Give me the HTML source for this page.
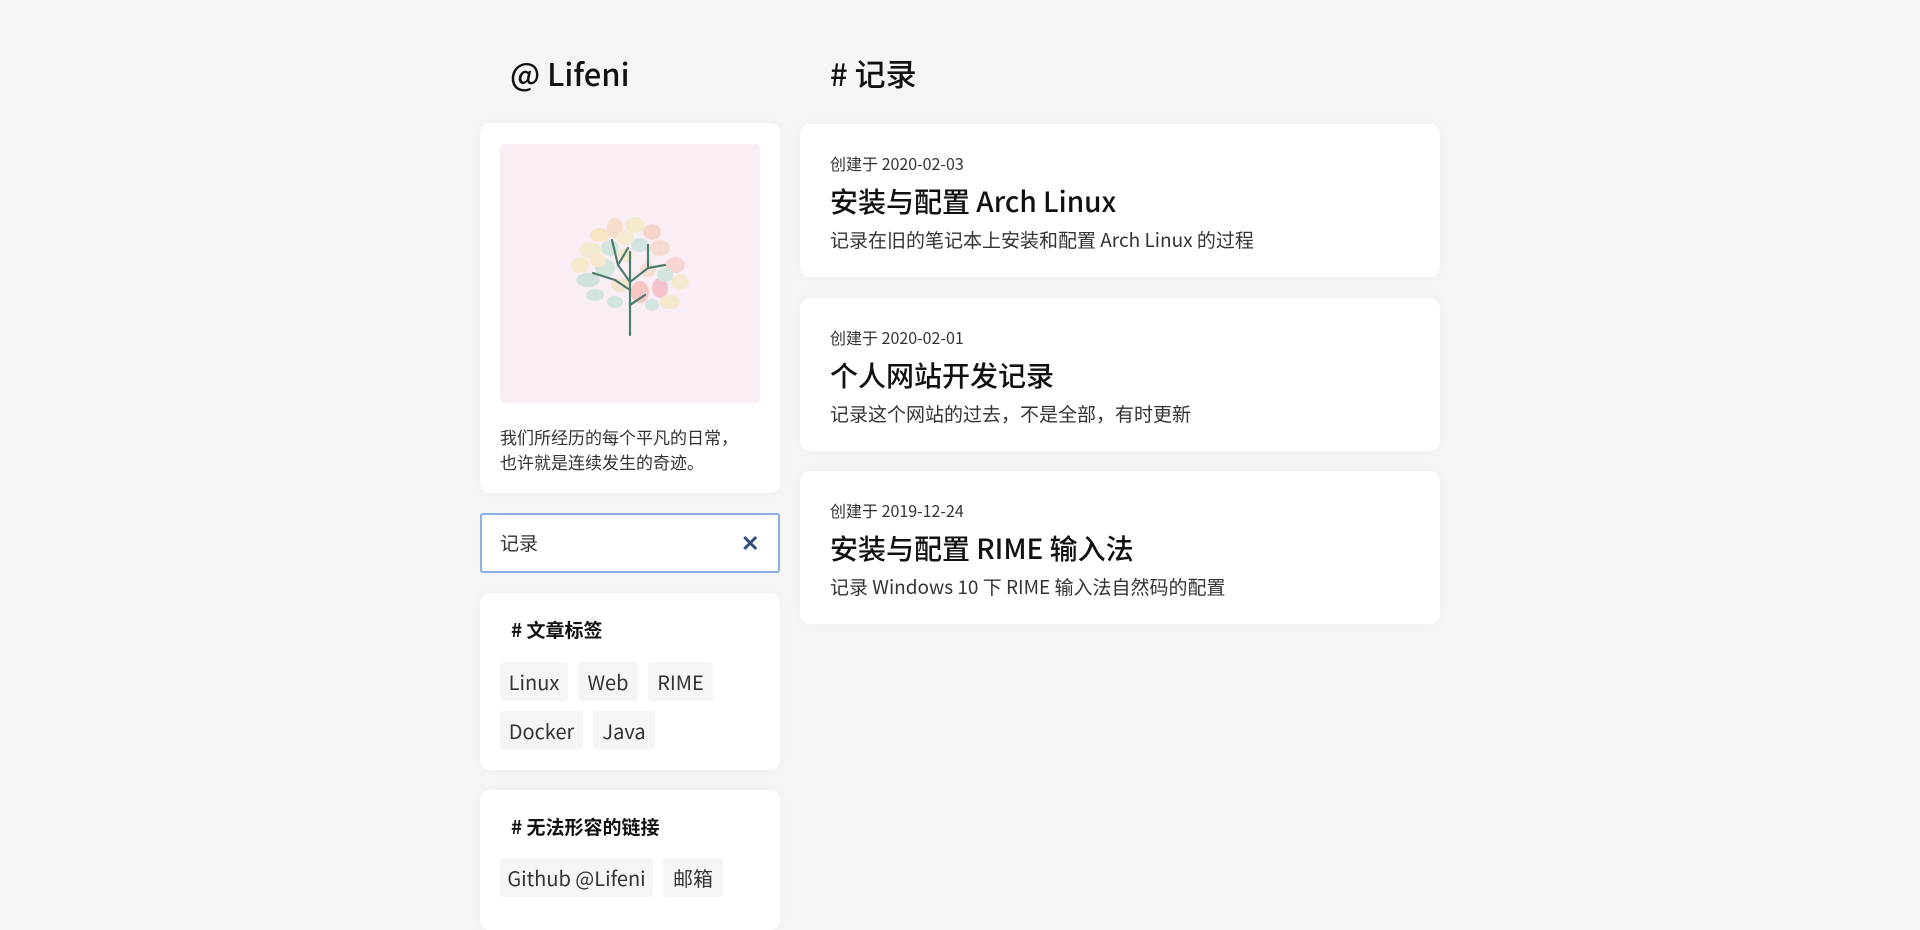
<!DOCTYPE html>
<html><head><meta charset="utf-8">
<style>
*{box-sizing:border-box;margin:0;padding:0}
body{width:1920px;height:882px;background:#f5f5f5;font-family:"Noto Sans CJK SC","Liberation Sans",sans-serif;color:#222;position:relative;overflow:hidden}
.abs{position:absolute}
.card{position:absolute;background:#fff;border-radius:10px;box-shadow:0 0 12px rgba(0,0,0,0.03)}
h1{position:absolute;font-size:31px;font-weight:500;color:#111;line-height:40px}
.tag{position:absolute;background:#f5f5f5;border-radius:4px;font-size:20px;font-weight:400;color:#333;line-height:39px;text-align:center;height:39px}
.hd{position:absolute;left:31px;font-size:19px;font-weight:700;color:#111;line-height:26px}
.date{position:absolute;left:30px;font-size:16px;color:#333;line-height:22px}
.tt{position:absolute;left:30px;font-size:28px;color:#111;line-height:36px;font-weight:500}
.ds{position:absolute;left:30px;font-size:19px;color:#333;line-height:26px;font-weight:400}
</style></head><body>
<h1 style="left:510px;top:53px">@ Lifeni</h1>
<h1 style="left:830px;top:53px"># 记录</h1>

<div class="card" style="left:480px;top:123px;width:300px;height:370px">
  <div class="abs" style="left:20px;top:21px;width:260px;height:259px;background:#f9eef6;border-radius:4px"></div>
  <div class="abs" style="left:20px;top:301px;font-size:17px;line-height:25px;color:#333">我们所经历的每个平凡的日常，<br>也许就是连续发生的奇迹。</div>
</div>
<svg class="abs" style="left:560px;top:210px" width="140" height="130" viewBox="0 0 140 130">
 <g opacity="0.45">
  <ellipse cx="40" cy="25" rx="10" ry="7" fill="#f6d98a"/>
  <ellipse cx="55" cy="18" rx="8" ry="10" fill="#f7c89a"/>
  <ellipse cx="75" cy="15" rx="10" ry="8" fill="#f2e69a"/>
  <ellipse cx="92" cy="22" rx="9" ry="8" fill="#f5b69a"/>
  <ellipse cx="30" cy="40" rx="11" ry="8" fill="#e9e79e"/>
  <ellipse cx="50" cy="38" rx="9" ry="8" fill="#a7d8c4"/>
  <ellipse cx="100" cy="38" rx="10" ry="8" fill="#f6c6a0"/>
  <ellipse cx="80" cy="35" rx="9" ry="7" fill="#a8d8c8"/>
  <ellipse cx="20" cy="55" rx="9" ry="8" fill="#f3e59a"/>
  <ellipse cx="28" cy="70" rx="12" ry="7" fill="#9fd2c0"/>
  <ellipse cx="45" cy="58" rx="10" ry="9" fill="#a9dcc0"/>
  <ellipse cx="115" cy="55" rx="10" ry="8" fill="#f5b7a8"/>
  <ellipse cx="120" cy="72" rx="9" ry="8" fill="#f4e5a0"/>
  <ellipse cx="100" cy="78" rx="8" ry="10" fill="#f0909a"/>
  <ellipse cx="80" cy="82" rx="9" ry="11" fill="#f39a8a"/>
  <ellipse cx="60" cy="75" rx="9" ry="7" fill="#f5d6a0"/>
  <ellipse cx="35" cy="85" rx="9" ry="6" fill="#a7d8c4"/>
  <ellipse cx="110" cy="92" rx="10" ry="7" fill="#f2e29a"/>
  <ellipse cx="88" cy="60" rx="8" ry="7" fill="#f6c7a8"/>
  <ellipse cx="65" cy="45" rx="8" ry="7" fill="#f6e4a6"/>
  <ellipse cx="55" cy="92" rx="8" ry="6" fill="#a5d6c6"/>
  <ellipse cx="65" cy="28" rx="9" ry="7" fill="#f4e7a6"/>
  <ellipse cx="38" cy="50" rx="8" ry="7" fill="#f6e0a2"/>
  <ellipse cx="105" cy="65" rx="8" ry="7" fill="#a9d9c7"/>
  <ellipse cx="92" cy="95" rx="7" ry="6" fill="#a8d8c6"/>
 </g>
 <g stroke="#4a7d6c" stroke-width="2.2" fill="none" stroke-linecap="round">
  <path d="M70 125 L70 42"/>
  <path d="M70 80 L55 70 L33 63"/>
  <path d="M70 72 L58 55 L52 30"/>
  <path d="M58 55 L68 38"/>
  <path d="M70 72 L88 58 L105 55"/>
  <path d="M88 58 L88 35"/>
  <path d="M70 95 L85 85"/>
 </g>
</svg>

<div class="abs" style="left:480px;top:513px;width:300px;height:60px;background:#fff;border:2px solid #8aaee6;border-radius:3px">
  <div class="abs" style="left:18px;top:14px;font-size:19px;line-height:28px;color:#333">记录</div>
  <div class="abs" style="left:259px;top:13px;font-size:22px;line-height:28px;color:#2f4f86;font-weight:700">✕</div>
</div>

<div class="card" style="left:480px;top:593px;width:300px;height:177px">
  <div class="hd" style="top:24px"># 文章标签</div>
  <div class="tag" style="left:20px;top:69px;width:68px">Linux</div>
  <div class="tag" style="left:98px;top:69px;width:60px">Web</div>
  <div class="tag" style="left:168px;top:69px;width:65px">RIME</div>
  <div class="tag" style="left:20px;top:118px;width:83px">Docker</div>
  <div class="tag" style="left:113px;top:118px;width:62px">Java</div>
</div>
<div class="card" style="left:480px;top:790px;width:300px;height:140px">
  <div class="hd" style="top:24px"># 无法形容的链接</div>
  <div class="tag" style="left:20px;top:68px;width:153px">Github @Lifeni</div>
  <div class="tag" style="left:183px;top:68px;width:60px">邮箱</div>
</div>

<div class="card" style="left:800px;top:124px;width:640px;height:153px">
  <div class="date" style="top:28px">创建于 2020-02-03</div>
  <div class="tt" style="top:59px">安装与配置 Arch Linux</div>
  <div class="ds" style="top:103px">记录在旧的笔记本上安装和配置 Arch Linux 的过程</div>
</div>
<div class="card" style="left:800px;top:298px;width:640px;height:153px">
  <div class="date" style="top:28px">创建于 2020-02-01</div>
  <div class="tt" style="top:59px">个人网站开发记录</div>
  <div class="ds" style="top:103px">记录这个网站的过去，不是全部，有时更新</div>
</div>
<div class="card" style="left:800px;top:471px;width:640px;height:153px">
  <div class="date" style="top:28px">创建于 2019-12-24</div>
  <div class="tt" style="top:59px">安装与配置 RIME 输入法</div>
  <div class="ds" style="top:103px">记录 Windows 10 下 RIME 输入法自然码的配置</div>
</div>
</body></html>
